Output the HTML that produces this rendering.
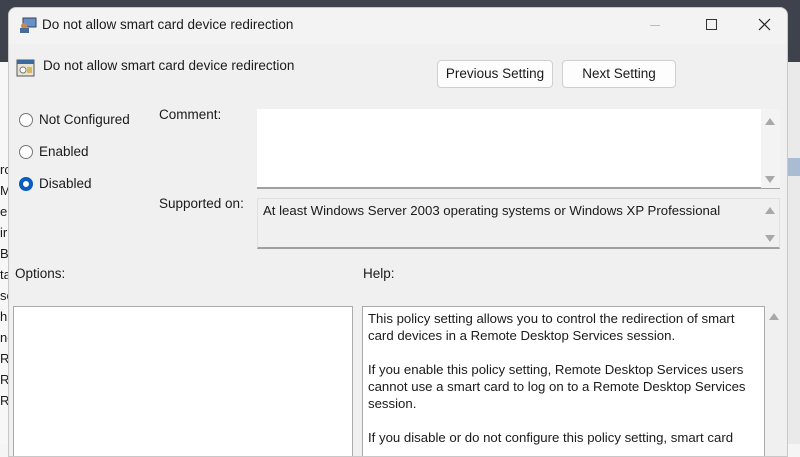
<!DOCTYPE html>
<html><head><style>
*{margin:0;padding:0;box-sizing:border-box}
body{width:800px;height:444px;overflow:hidden;background:#f5f5f5;font-family:"Liberation Sans",sans-serif;position:relative;font-size:13px;color:#1a1a1a}
.a{position:absolute}
.dlg{left:8px;top:7px;width:780px;height:450px;background:#f0f0f0;border:1px solid #c8c8c8;border-radius:8px 8px 0 0;overflow:hidden}
.tb{left:0;top:0;width:780px;height:36px;background:#f3f3f3}
.btn{background:#fdfdfd;border:1px solid #cfcfcf;border-radius:4px;height:28px;top:52px;text-align:center;line-height:26px;font-size:13.5px}
.rad{width:14px;height:14px;border:1px solid #777;border-radius:50%;background:#fff}
.box{background:#fff;border:1px solid #aaa}
.sl{font-size:13.5px}
.arr{width:0;height:0;border-left:5px solid transparent;border-right:5px solid transparent}
.up{border-bottom:7px solid #a8a8a8}.dn{border-top:7px solid #a8a8a8}
.lt div{position:absolute;left:0;font-size:13px}
</style></head><body>
<div class="a" style="left:0;top:0;width:800px;height:62px;background:#3d424c"></div>
<div class="a" style="left:788px;top:62px;width:12px;height:382px;background:#eaeaea"></div>
<div class="a" style="left:788px;top:158px;width:12px;height:18px;background:#a9bcd3"></div>
<div class="a lt" style="left:0;top:62px;width:8px;height:382px;background:#f7f7f7;overflow:hidden">
<div style="top:100px">rc</div><div style="top:121px">M</div><div style="top:142px">eD</div><div style="top:163px">ir</div><div style="top:184px">Bl</div><div style="top:205px">ta</div><div style="top:226px">se</div><div style="top:247px">h</div><div style="top:268px">nc</div><div style="top:289px">R</div><div style="top:310px">R</div><div style="top:331px">R</div>
</div>
<div class="a dlg">
<div class="a tb"></div>
<svg class="a" style="left:10px;top:9px" width="18" height="16"><rect x="4" y="1" width="13" height="9" fill="#6a90c8" stroke="#345" stroke-width="1"/><circle cx="5" cy="9" r="3" fill="#c88a50"/><rect x="1" y="11" width="9" height="5" fill="#4a6a9a"/></svg>
<div class="a" style="left:33px;top:9px;font-size:13.5px">Do not allow smart card device redirection</div>
<div class="a" style="left:641px;top:17px;width:10px;height:1px;background:#bbb"></div>
<div class="a" style="left:697px;top:11px;width:11px;height:11px;border:1px solid #333"></div>
<svg class="a" style="left:749px;top:10px" width="13" height="13"><path d="M1 1L12 12M12 1L1 12" stroke="#222" stroke-width="1.2"/></svg>
<svg class="a" style="left:7px;top:50px" width="20" height="20"><rect x="1" y="2" width="17" height="16" fill="#e8e4d0" stroke="#556" /><rect x="1" y="2" width="17" height="4" fill="#3a6aa0"/><circle cx="7" cy="12" r="3" fill="#fff" stroke="#777"/><rect x="11" y="9" width="5" height="6" fill="#d8b860"/></svg>
<div class="a" style="left:34px;top:50px;font-size:13.5px">Do not allow smart card device redirection</div>
<div class="a btn" style="left:428px;width:116px">Previous Setting</div>
<div class="a btn" style="left:553px;width:114px">Next Setting</div>
<div class="a rad" style="left:10px;top:105px"></div><div class="a sl" style="left:30px;top:104px">Not Configured</div>
<div class="a rad" style="left:10px;top:137px"></div><div class="a sl" style="left:30px;top:136px">Enabled</div>
<div class="a rad" style="left:10px;top:169px;border:4px solid #0a5cc0"></div><div class="a sl" style="left:30px;top:168px">Disabled</div>
<div class="a sl" style="left:150px;top:99px">Comment:</div>
<div class="a" style="left:248px;top:101px;width:523px;height:80px;background:#fff;border-bottom:2px solid #a0a0a0"></div>
<div class="a" style="left:752px;top:101px;width:19px;height:79px;background:#f3f3f3"></div>
<div class="a arr up" style="left:756px;top:110px"></div><div class="a arr dn" style="left:756px;top:168px"></div>
<div class="a sl" style="left:150px;top:188px">Supported on:</div>
<div class="a" style="left:248px;top:190px;width:523px;height:51px;background:#f0f0f0;border:1px solid #e0e0e0;border-bottom:2px solid #a0a0a0"></div>
<div class="a" style="left:254px;top:195px;font-size:13.2px">At least Windows Server 2003 operating systems or Windows XP Professional</div>
<div class="a arr up" style="left:756px;top:199px"></div><div class="a arr dn" style="left:756px;top:227px"></div>
<div class="a sl" style="left:6px;top:258px">Options:</div>
<div class="a sl" style="left:354px;top:258px">Help:</div>
<div class="a box" style="left:4px;top:298px;width:340px;height:160px"></div>
<div class="a box" style="left:353px;top:298px;width:403px;height:160px;padding:3px 5px;font-size:13.2px;line-height:17px">This policy setting allows you to control the redirection of smart card devices in a Remote Desktop Services session.<br><br>If you enable this policy setting, Remote Desktop Services users cannot use a smart card to log on to a Remote Desktop Services session.<br><br>If you disable or do not configure this policy setting, smart card</div>
<div class="a arr up" style="left:760px;top:305px"></div>
</div>
</body></html>
